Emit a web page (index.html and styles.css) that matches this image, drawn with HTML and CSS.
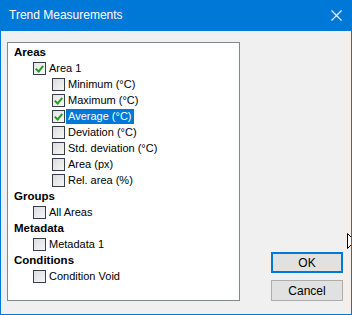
FILE: index.html
```html
<!DOCTYPE html>
<html lang="en">
<head>
    <meta charset="UTF-8">
    <title>Trend Measurements</title>
    <link rel="stylesheet" href="styles.css">
</head>
<body>
    <div class="window">
        <div class="titlebar">
            <span class="title">Trend Measurements</span>
            <svg class="close" width="11" height="11" viewBox="0 0 11 11">
                <path d="M0.5 0.5 L10.5 10.5 M10.5 0.5 L0.5 10.5" stroke="#fff" stroke-width="1.1" fill="none"/>
            </svg>
        </div>
        <div class="content">
            <div class="tree">
                <div class="row head">Areas</div>
                <div class="row lvl1"><span class="box checked"></span><span class="label">Area 1</span></div>
                <div class="row lvl2"><span class="box"></span><span class="label">Minimum (°C)</span></div>
                <div class="row lvl2"><span class="box checked"></span><span class="label">Maximum (°C)</span></div>
                <div class="row lvl2"><span class="box checked"></span><span class="label selected">Average (°C)</span></div>
                <div class="row lvl2"><span class="box"></span><span class="label">Deviation (°C)</span></div>
                <div class="row lvl2"><span class="box"></span><span class="label">Std. deviation (°C)</span></div>
                <div class="row lvl2"><span class="box"></span><span class="label">Area (px)</span></div>
                <div class="row lvl2"><span class="box"></span><span class="label">Rel. area (%)</span></div>
                <div class="row head">Groups</div>
                <div class="row lvl1"><span class="box"></span><span class="label">All Areas</span></div>
                <div class="row head">Metadata</div>
                <div class="row lvl1"><span class="box"></span><span class="label">Metadata 1</span></div>
                <div class="row head">Conditions</div>
                <div class="row lvl1"><span class="box"></span><span class="label">Condition Void</span></div>
            </div>
            <div class="buttons">
                <button class="btn default">OK</button>
                <button class="btn">Cancel</button>
            </div>
        </div>
        <!-- mouse pointer peeking in at the right edge -->
        <svg class="cursor" width="12" height="19" viewBox="0 0 12 19">
            <path d="M0.5 0.5 L0.5 15.5 L4 12 L6.5 18 L8.5 17 L6 11 L11 11 Z" fill="#fff" stroke="#000" stroke-width="1"/>
        </svg>
    </div>
</body>
</html>
```

FILE: styles.css
```css
body {
    margin: 0;
    background: #f0f0f0;
}
.window {
    position: relative;
    width: 352px;
    height: 315px;
    box-sizing: border-box;
    border: 1px solid #0078d7;
    border-top: none;
    background: #f0f0f0;
    overflow: hidden;
    display: flex;
    flex-direction: column;
}
.titlebar {
    height: 31px;
    background: #0078d7;
    display: flex;
    align-items: center;
    justify-content: space-between;
    padding: 0 9px 0 8px;
    box-sizing: border-box;
}
.title {
    color: #fff;
    font-family: "Liberation Sans", Arial, sans-serif;
    font-size: 12px;
    padding-bottom: 1px;
}
.close {
    display: block;
    margin-bottom: 1px;
}
.content {
    flex: 1;
    display: flex;
    justify-content: space-between;
    padding: 11px 8px 13px 6px;
}
.tree {
    width: 233px;
    box-sizing: border-box;
    border: 1px solid #828790;
    background: #fff;
    padding: 1px 0 0 6px;
    font-family: "Liberation Sans", Tahoma, sans-serif;
    font-size: 11px;
    color: #000;
}
.row {
    height: 16px;
    display: flex;
    align-items: center;
}
.head {
    font-weight: bold;
    font-size: 11.5px;
}
.lvl1 {
    padding-left: 19px;
}
.lvl2 {
    padding-left: 38px;
}
.box {
    width: 13px;
    height: 13px;
    box-sizing: border-box;
    border: 1px solid #333f4d;
    background: linear-gradient(135deg, #dcdcdc 0%, #f6f6f6 100%);
    margin-right: 1px;
    position: relative;
}
.box.checked {
    background: linear-gradient(135deg, #e4e4e4 0%, #fbfbfb 100%);
}
.box.checked::after {
    content: "";
    position: absolute;
    left: 3px;
    top: 1px;
    width: 3px;
    height: 6px;
    border-right: 2px solid #21a121;
    border-bottom: 2px solid #21a121;
    transform: rotate(40deg);
}
.label {
    padding: 1px 2px;
    line-height: 13px;
}
.selected {
    background: #0078d7;
    color: #fff;
}
.buttons {
    display: flex;
    flex-direction: column;
    justify-content: flex-end;
    gap: 7px;
}
.btn {
    width: 72px;
    height: 21px;
    box-sizing: border-box;
    border: 1px solid #adadad;
    background: #e1e1e1;
    font-family: "Liberation Sans", Arial, sans-serif;
    font-size: 12px;
    color: #000;
    padding: 0;
    margin: 0;
}
.btn.default {
    border: 2px solid #0078d7;
}
.cursor {
    position: absolute;
    left: 346px;
    top: 233px;
}
```
